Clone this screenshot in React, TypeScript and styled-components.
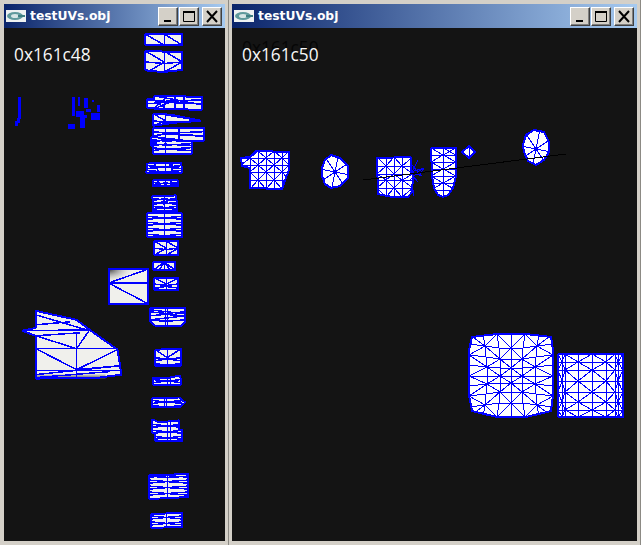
import React from 'react'
import styled, { createGlobalStyle } from 'styled-components'

const GlobalStyle = createGlobalStyle`
  html, body {
    margin: 0;
    padding: 0;
    background: #d4d0c8;
  }
`

const Desktop = styled.div`
  display: flex;
  width: 641px;
  height: 545px;
  overflow: hidden;
  background: #d4d0c8;
`

const Win = styled.div<{ $width: number; $inset: number }>`
  display: flex;
  flex-direction: column;
  box-sizing: border-box;
  width: ${(p) => p.$width}px;
  height: 545px;
  padding: 4px 3px 4px ${(p) => p.$inset}px;
  background: #d4d0c8;
  border-right: 1px solid #8c8a84;
`

const TitleBar = styled.div`
  display: flex;
  align-items: center;
  flex: none;
  height: 24px;
  padding: 0 3px 0 2px;
  background: linear-gradient(90deg, #0a246a 0%, #a6caf0 100%);
`

const AppIcon = styled.svg`
  flex: none;
  width: 20px;
  height: 12px;
  margin-right: 4px;
`

const TitleText = styled.span`
  flex: 1;
  font-family: 'DejaVu Sans', sans-serif;
  font-size: 12.3px;
  font-weight: 700;
  color: #ffffff;
  white-space: nowrap;
`

const CtlButton = styled.div<{ $gap: number }>`
  display: flex;
  align-items: center;
  justify-content: center;
  box-sizing: border-box;
  width: 20px;
  height: 19px;
  margin-left: ${(p) => p.$gap}px;
  background: #d4d0c8;
  border: 1px solid;
  border-color: #ffffff #404040 #404040 #ffffff;
  box-shadow: inset -1px -1px 0 #808080;
`

const Canvas = styled.div`
  position: relative;
  flex: 1;
  padding: 17px 10px;
  background: #141414;
  overflow: hidden;
`

const Address = styled.div<{ $ghost?: boolean }>`
  position: relative;
  font-family: 'Open Sans', sans-serif;
  font-size: 17.3px;
  line-height: 20px;
  color: #f8f8f8;
  text-shadow: ${(p) => (p.$ghost ? '0 -7px 0 #060606' : 'none')};
`

const Drawing = styled.svg`
  position: absolute;
  inset: 0;
  width: 100%;
  height: 100%;
`

const Fill = styled.polygon<{ $color: string }>`
  fill: ${(p) => p.$color};
  stroke: none;
`

const Wire = styled.path<{ $weight?: number }>`
  fill: none;
  stroke: #0000ff;
  stroke-width: ${(p) => p.$weight ?? 1.5};
  shape-rendering: crispEdges;
`

const Outline = styled.polygon`
  fill: none;
  stroke: #0000ff;
  stroke-width: 2;
  stroke-linejoin: bevel;
  shape-rendering: crispEdges;
`

const Solid = styled.path`
  fill: #0000ff;
  shape-rendering: crispEdges;
`

const BlackLine = styled.path`
  fill: none;
  stroke: #000000;
  stroke-width: 1;
  shape-rendering: crispEdges;
`

type Chunk = {
  pts: string
  cols?: number[]
  rows?: number[]
  diag?: boolean
  zig?: boolean
  spokes?: [number, number]
  extra?: string
  loose?: string
}

const box = (x0: number, y0: number, x1: number, y1: number) =>
  `${x0},${y0} ${x1},${y0} ${x1},${y1} ${x0},${y1}`

const bbox = (pts: string) => {
  const v = pts.split(' ').map((p) => p.split(',').map(Number))
  return {
    x0: Math.min(...v.map((p) => p[0])),
    x1: Math.max(...v.map((p) => p[0])),
    y0: Math.min(...v.map((p) => p[1])),
    y1: Math.max(...v.map((p) => p[1])),
  }
}

function wireFor(c: Chunk) {
  const b = bbox(c.pts)
  const xs = c.cols ?? []
  const ys = c.rows ?? []
  let d = c.extra ?? ''
  xs.forEach((x) => (d += `M${x} ${b.y0}L${x} ${b.y1}`))
  ys.forEach((y, i) => {
    if (c.zig) {
      const mid = xs[0] ?? (b.x0 + b.x1) / 2
      const dip = i % 2 === 0 ? 1.5 : -1.5
      d += `M${b.x0} ${y}L${mid} ${y + dip}L${b.x1} ${y}`
    } else {
      d += `M${b.x0} ${y}L${b.x1} ${y}`
    }
  })
  if (c.diag) {
    const gx = [b.x0, ...xs, b.x1]
    const gy = [b.y0, ...ys, b.y1]
    for (let i = 0; i < gx.length - 1; i++) {
      for (let j = 0; j < gy.length - 1; j++) {
        d +=
          (i + j) % 2 === 0
            ? `M${gx[i]} ${gy[j]}L${gx[i + 1]} ${gy[j + 1]}`
            : `M${gx[i + 1]} ${gy[j]}L${gx[i]} ${gy[j + 1]}`
      }
    }
  }
  if (c.spokes) {
    const [cx, cy] = c.spokes
    for (let a = 0; a < 8; a++) {
      const t = (a * Math.PI) / 4 + 0.2
      d += `M${cx} ${cy}L${Math.round(cx + Math.cos(t) * 40)} ${Math.round(cy + Math.sin(t) * 40)}`
    }
  }
  return d
}

// pillow mesh: a 7x9 grid pinched towards the middle
function pillowWire() {
  const cols = 7
  const rows = 9
  const node = (i: number, j: number) => {
    const u = (i / (cols - 1)) * 2 - 1
    const v = (j / (rows - 1)) * 2 - 1
    const pinch = 1 - 0.28 * (1 - u * u) * (1 - v * v)
    return `${Math.round(511 + 42 * u * pinch)} ${Math.round(375.5 + 41.5 * v * pinch)}`
  }
  let d = ''
  for (let i = 0; i < cols; i++) {
    for (let j = 0; j < rows; j++) {
      if (i < cols - 1) d += `M${node(i, j)}L${node(i + 1, j)}`
      if (j < rows - 1) d += `M${node(i, j)}L${node(i, j + 1)}`
      if (i < cols - 1 && j < rows - 1) {
        d +=
          (i + j) % 2 === 0
            ? `M${node(i, j)}L${node(i + 1, j + 1)}`
            : `M${node(i + 1, j)}L${node(i, j + 1)}`
      }
    }
  }
  return d
}

const leftChunks: Chunk[] = [
  { pts: box(146, 33, 183, 44), cols: [165], extra: 'M146 33L165 44M165 33L183 44' },
  { pts: '146,50 183,51 183,69 165,71 150,70 146,69', cols: [165], rows: [61], extra: 'M146 50L165 61M165 50L183 61M165 71L183 61M150 70L165 61' },
  { pts: '155,95 203,96 203,109 155,108 155,107 148,107 148,98 155,98', cols: [165, 176, 185], rows: [99, 103], extra: 'M155 95L203 104M155 108L176 99M155 99L165 107M155 107L165 99' },
  { pts: '154,113 172,114 202,120 175,122 154,125', cols: [166], rows: [120], extra: 'M154 113L166 120M154 125L166 120M166 114L202 120' },
  { pts: box(154, 127, 205, 140), cols: [166, 180], rows: [131, 135], extra: 'M154 131L205 136' },
  { pts: '152,136 193,141 193,153 154,153 154,145 152,145', cols: [166], rows: [139, 141, 143, 145, 147, 150], extra: 'M152 143L172 136' },
  { pts: '148,163 182,162 183,172 147,172', cols: [166, 173], rows: [165, 168, 170], extra: 'M155 163L160 172M170 163L175 172' },
  { pts: box(154, 180, 179, 186), cols: [166, 172], rows: [182, 184], extra: 'M158 180L162 186' },
  { pts: '153,196 177,195 178,211 154,211', cols: [165], rows: [198, 200, 202, 204, 206, 209], extra: 'M156 203L176 199M157 206L172 208' },
  { pts: box(148, 213, 183, 237), cols: [165], rows: [216, 219, 222, 225, 228, 231, 234] },
  { pts: box(155, 241, 179, 255), cols: [167], rows: [248], extra: 'M155 241L167 248M167 241L179 248M155 255L167 248M167 255L179 248' },
  { pts: box(154, 262, 176, 270), cols: [165], extra: 'M154 270L165 262M176 270L165 262M160 270L165 262M171 270L165 262' },
  { pts: box(155, 278, 179, 290), cols: [167], rows: [284, 288], extra: 'M155 278L167 284M179 278L167 284M155 290L167 284' },
  { pts: '151,308 186,308 186,322 182,326 156,326 151,322', cols: [166, 168], rows: [312, 316, 320], extra: 'M151 310L186 314M151 320L186 316' },
  { pts: '156,350 182,349 182,366 156,366', cols: [168], rows: [358, 361, 364], extra: 'M156 350L168 358M182 349L168 358' },
  { pts: '154,378 170,378 181,376 182,385 154,385', cols: [168, 171], rows: [380, 383] },
  { pts: '153,399 180,398 186,403 180,408 153,408', cols: [165, 167], rows: [401, 404, 406] },
  { pts: '153,420 160,423 180,421 180,430 183,431 183,442 156,442 156,434 153,434', cols: [168, 171], rows: [425, 428, 431, 434, 437, 440] },
  { pts: '150,476 189,475 189,498 150,500', cols: [168], rows: [477, 478, 481, 484, 487, 490, 493, 496] },
  { pts: '152,515 183,514 183,528 152,529', cols: [167], rows: [517, 520, 523, 526] },
].map((c) => ({ ...c, zig: true }))

const rightChunks: Chunk[] = [
  {
    pts: '241,158 250,157 256,151 289,152 289,170 285,180 282,189 250,188 250,168 242,166',
    cols: [250, 258, 266, 274, 282],
    rows: [158, 165, 172, 180],
    diag: true,
  },
  { pts: '331,155 340,158 348,166 348,178 340,186 331,188 325,184 322,176 322,168 325,160', spokes: [335, 172] },
  {
    pts: '377,158 411,157 411,172 413,176 412,192 408,197 392,197 378,194',
    cols: [386, 394, 402],
    rows: [166, 174, 180, 188],
    diag: true,
    loose: 'M411 172L424 168M411 172L422 176M410 180L420 170M411 164L418 172M412 172L418 160M413 176L418 182M413 190L414 196M417 172L424 168L419 176',
  },
  {
    pts: '431,148 456,148 456,176 453,188 448,195 443,197 438,195 434,188 432,176',
    cols: [443],
    rows: [155, 162, 169, 176, 183, 190],
    diag: true,
    extra: 'M431 148L443 155M443 148L456 155',
  },
  { pts: '462,152 469,146 475,152 469,158', cols: [469] },
  { pts: '534,130 544,132 549,142 549,152 544,160 536,165 528,161 524,152 523,145 526,135', spokes: [536, 149] },
  {
    pts: '472,337 497,334 526,334 551,337 553,350 553,395 551,411 526,417 497,417 472,411 469,395 469,350',
    extra: pillowWire(),
  },
  {
    pts: box(558, 354, 623, 417),
    cols: [562, 565, 578, 592, 606, 615, 618],
    rows: [362, 370, 381, 392, 402, 410],
    diag: true,
  },
]

type MeshSetProps = { chunks: Chunk[]; color: string; prefix: string; weight?: number }

function MeshSet({ chunks, color, prefix, weight }: MeshSetProps) {
  return (
    <>
      {chunks.map((c, i) => (
        <g key={i}>
          <clipPath id={`${prefix}${i}`}>
            <polygon points={c.pts} />
          </clipPath>
          <Fill $color={color} points={c.pts} />
          <g clipPath={`url(#${prefix}${i})`}>
            <Wire $weight={weight} d={wireFor(c)} />
          </g>
          <Outline points={c.pts} />
          {c.loose && <Wire $weight={weight} d={c.loose} />}
        </g>
      ))}
    </>
  )
}

function LeftDrawing() {
  const sheet = '109,269 149,269 149,304 109,304'
  const wing = '36,311 77,320 90,330 118,350 122,375 100,378 36,379 36,336 22,331 36,328'
  return (
    <Drawing viewBox="4 28 222 513">
      <defs>
        <radialGradient id="corner" cx="0" cy="0" r="1">
          <stop offset="0" stopColor="#333333" />
          <stop offset="1" stopColor="#f0f0ec" stopOpacity="0" />
        </radialGradient>
        <linearGradient id="under" x1="0" y1="0" x2="0" y2="1">
          <stop offset="0" stopColor="#f0f0ec" />
          <stop offset="1" stopColor="#505050" />
        </linearGradient>
      </defs>
      <Solid d="M18 96h3v22h-1v4h-2v3h-3v-5h2v-3h1zM72 96h3v19h-3zM78 96h2v9h-2zM84 97h4v10h-4zM92 99h2v2h-2zM97 104h3v7h-3zM76 110h8v6h-8zM86 108h5v3h-5zM91 112h9v7h-9zM82 114h5v3h-5zM80 116h5v11h-5zM68 123h7v5h-7z" />
      <MeshSet chunks={leftChunks} color="#f0f0ec" prefix="l" />
      <Fill $color="#f0f0ec" points={sheet} />
      <rect x="109" y="269" width="26" height="14" fill="url(#corner)" />
      <Wire d="M109 283L149 269M109 283H149M109 283L149 304" />
      <Outline points={sheet} />
      <Fill $color="#f0f0ec" points={wing} />
      <rect x="36" y="374" width="70" height="5" fill="url(#under)" />
      <Wire d="M36 315L90 331M22 331L90 330M36 336L80 333M36 336L77 349M36 349H118M77 333V379M77 349L90 330M36 349L77 370M77 370L118 350M36 371H122M36 375L122 366M36 378L110 372M77 370L122 366M36 325L70 322" />
      <Outline points={wing} />
    </Drawing>
  )
}

function RightDrawing() {
  return (
    <Drawing viewBox="232 28 405 513">
      <MeshSet chunks={rightChunks} color="#ffffff" prefix="r" weight={1} />
      <BlackLine d="M363 180L566 154" />
    </Drawing>
  )
}

function Controls() {
  return (
    <>
      <CtlButton $gap={0}>
        <svg width="14" height="13" viewBox="0 0 14 13">
          <rect x="3" y="10" width="7" height="2" fill="#000" />
        </svg>
      </CtlButton>
      <CtlButton $gap={1}>
        <svg width="14" height="13" viewBox="0 0 14 13">
          <path d="M1.5 2.5h11v9h-11z" fill="none" stroke="#000" />
          <rect x="1" y="1" width="12" height="2" fill="#000" />
        </svg>
      </CtlButton>
      <CtlButton $gap={3}>
        <svg width="14" height="13" viewBox="0 0 14 13">
          <path d="M2 1L12 12M12 1L2 12" fill="none" stroke="#000" strokeWidth="2" />
        </svg>
      </CtlButton>
    </>
  )
}

function Icon() {
  return (
    <AppIcon viewBox="0 0 20 12">
      <rect width="20" height="12" fill="#eef2f2" />
      <ellipse cx="9" cy="6" rx="8" ry="4" fill="#5f9a9c" />
      <ellipse cx="9" cy="6" rx="4" ry="2" fill="#d6e6e6" />
      <rect x="12" y="5" width="7" height="2" fill="#3d7f82" />
    </AppIcon>
  )
}

export default function App() {
  return (
    <>
      <GlobalStyle />
      <Desktop>
        <Win $width={229} $inset={4}>
          <TitleBar>
            <Icon />
            <TitleText>testUVs.obj</TitleText>
            <Controls />
          </TitleBar>
          <Canvas>
            <LeftDrawing />
            <Address>0x161c48</Address>
          </Canvas>
        </Win>
        <Win $width={412} $inset={3}>
          <TitleBar>
            <Icon />
            <TitleText>testUVs.obj</TitleText>
            <Controls />
          </TitleBar>
          <Canvas>
            <RightDrawing />
            <Address $ghost>0x161c50</Address>
          </Canvas>
        </Win>
      </Desktop>
    </>
  )
}
